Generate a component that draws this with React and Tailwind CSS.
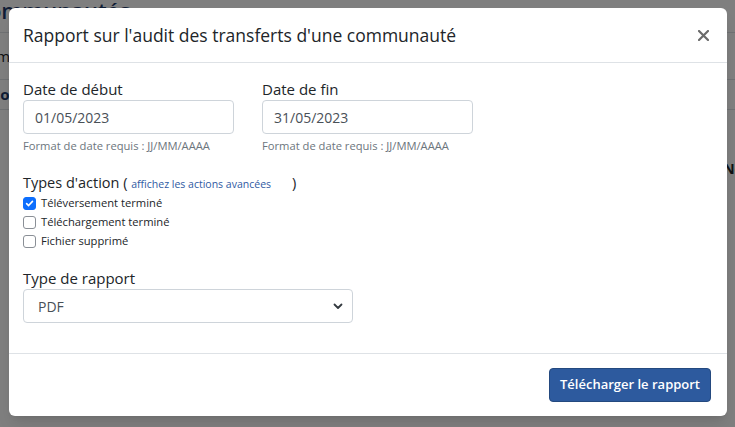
import React, { useState } from "react";

const actions = [
  { id: "upload", label: "Téléversement terminé", checked: true },
  { id: "download", label: "Téléchargement terminé", checked: false },
  { id: "delete", label: "Fichier supprimé", checked: false },
];

const font = { fontFamily: '"Open Sans", "Noto Sans", sans-serif' };

const CheckBox = ({ checked, onChange }) => (
  <button
    type="button"
    onClick={onChange}
    className={`w-[13px] h-[13px] rounded-[3px] flex items-center justify-center shrink-0 ${
      checked ? "bg-[#0d6efd] border border-[#0d6efd]" : "bg-white border border-[#8a8f96]"
    }`}
  >
    {checked && (
      <svg width="9" height="9" viewBox="0 0 10 10" fill="none">
        <path d="M1.8 5.2 4 7.3 8.3 2.6" stroke="white" strokeWidth="1.8" strokeLinecap="round" strokeLinejoin="round" />
      </svg>
    )}
  </button>
);

const DateField = ({ label, value }) => (
  <div className="flex flex-col w-[211px]">
    <label className="text-[15px] leading-[21px] text-[#212529]">{label}</label>
    <div className="h-[34px] border border-[#ced4da] rounded-[4px] px-[11px] flex items-center text-[14px] text-[#495057]">
      {value}
    </div>
    <span className="mt-[3px] text-[11.2px] leading-[18px] text-[#6c757d]">Format de date requis : JJ/MM/AAAA</span>
  </div>
);

const App = () => {
  const [checks, setChecks] = useState(actions.map((a) => a.checked));

  return (
    <div className="relative w-[735px] h-[427px] overflow-hidden bg-white" style={font}>
      {/* page behind the dialog */}
      <div className="flex flex-col">
        <div className="h-[33px] border-b border-[#dee2e6] text-[22px] leading-[20px] text-[#1f3b6b] -ml-[26px] font-semibold">
          Communautés
        </div>
        <div className="h-[47px] border-b border-[#dee2e6] flex items-center text-[15px] text-[#212529] -ml-[36px]">
          Communautés
        </div>
        <div className="h-[30px] border-b border-[#dee2e6] flex items-center text-[15px] font-bold text-[#1f3b6b] -ml-[12px]">
          Nom
        </div>
        <div className="h-[26px] flex items-center text-[11px] text-[#212529] -ml-[38px]">Nessa</div>
        <div className="flex justify-end -mr-[22px] mt-[22px] text-[14px] font-bold text-[#212529]">Nom</div>
      </div>

      {/* overlay */}
      <div className="absolute inset-0 bg-black/50 pt-[8px] pl-[9px]">
        <div className="w-[718px] h-[408px] bg-white rounded-[6px] flex flex-col shadow-lg">
          {/* header */}
          <div className="h-[55px] flex items-center justify-between pl-[14px] pr-[16px] border-b border-[#dee2e6]">
            <h1 className="text-[17.5px] text-[#212529]">Rapport sur l'audit des transferts d'une communauté</h1>
            <button type="button" className="w-[16px] h-[16px] flex items-center justify-center">
              <svg width="11" height="11" viewBox="0 0 11 11">
                <path d="M1 1 10 10M10 1 1 10" stroke="#6b6b6b" strokeWidth="2.2" strokeLinecap="round" />
              </svg>
            </button>
          </div>

          {/* body */}
          <div className="flex-1 pt-[16px] px-[14px]">
            <div className="flex gap-[28px]">
              <DateField label="Date de début" value="01/05/2023" />
              <DateField label="Date de fin" value="31/05/2023" />
            </div>

            <div className="mt-[18px] text-[14.5px] leading-[20px] text-[#212529]">
              Types d'action ({" "}
              <a href="#" className="text-[10.5px] text-[#2f5aa3]">
                affichez les actions avancées
              </a>
              <span className="ml-[21px]">)</span>
            </div>
            <div className="flex flex-col">
              {actions.map((a, i) => (
                <label key={a.id} className="h-[19px] flex items-center gap-[5px] text-[11.2px] text-[#212529]">
                  <CheckBox
                    checked={checks[i]}
                    onChange={() => setChecks((prev) => prev.map((c, j) => (j === i ? !c : c)))}
                  />
                  {a.label}
                </label>
              ))}
            </div>

            <div className="mt-[17px] text-[15px] leading-[21px] text-[#212529]">Type de rapport</div>
            <div className="w-[330px] h-[34px] border border-[#ced4da] rounded-[4px] pl-[14px] pr-[9px] flex items-center justify-between text-[14px] text-[#495057]">
              <span>PDF</span>
              <svg width="10" height="8" viewBox="0 0 10 8">
                <path d="M1.5 2.5 5 6 8.5 2.5" stroke="#343a40" strokeWidth="1.8" fill="none" strokeLinecap="round" strokeLinejoin="round" />
              </svg>
            </div>
          </div>

          {/* footer */}
          <div className="h-[63px] border-t border-[#dee2e6] flex items-center justify-end pr-[16px]">
            <button
              type="button"
              className="w-[162px] h-[34px] rounded-[4px] bg-[#2d5a9e] border border-[#24497f] text-white text-[13px] font-semibold"
            >
              Télécharger le rapport
            </button>
          </div>
        </div>
      </div>
    </div>
  );
};

export default App;
